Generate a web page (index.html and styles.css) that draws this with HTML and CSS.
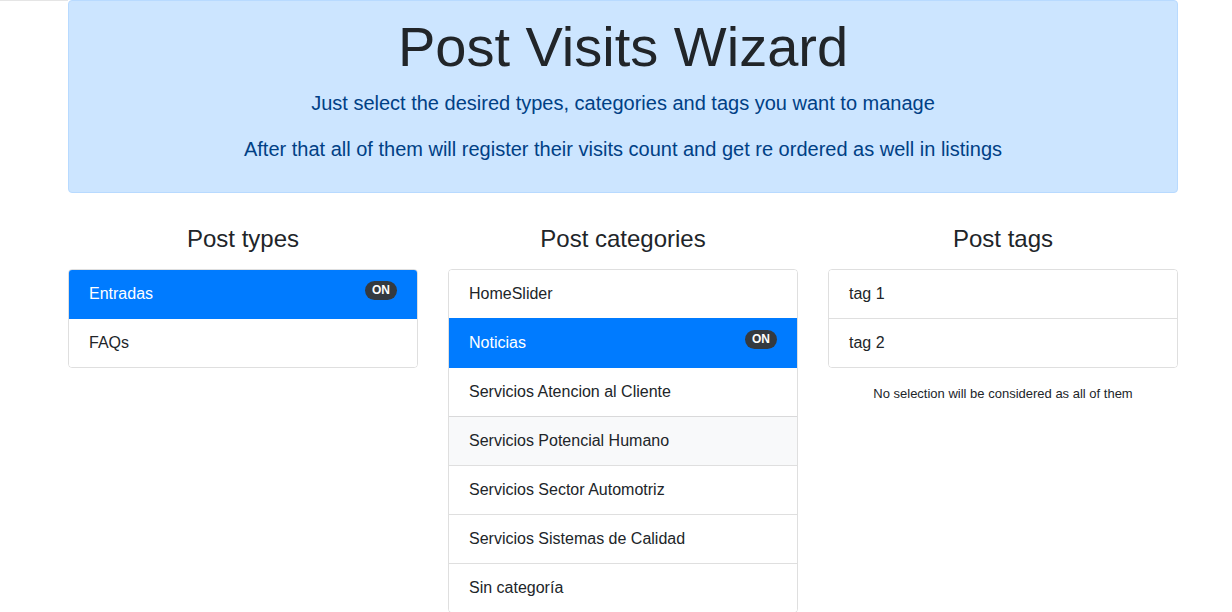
FILE: index.html
```html
<!DOCTYPE html>
<html lang="en">
<head>
<meta charset="utf-8">
<title>Post Visits Wizard</title>
<link rel="stylesheet" href="styles.css">
</head>
<body>
<div class="page">
  <div class="container">
    <div class="alert">
      <h1 class="title">Post Visits Wizard</h1>
      <p class="lead">Just select the desired types, categories and tags you want to manage</p>
      <p class="lead">After that all of them will register their visits count and get re ordered as well in listings</p>
    </div>
    <div class="columns">
      <div class="col">
        <h4 class="col-title">Post types</h4>
        <ul class="list">
          <li class="item active">Entradas<span class="badge">ON</span></li>
          <li class="item">FAQs</li>
        </ul>
      </div>
      <div class="col">
        <h4 class="col-title">Post categories</h4>
        <ul class="list">
          <li class="item">HomeSlider</li>
          <li class="item active">Noticias<span class="badge">ON</span></li>
          <li class="item">Servicios Atencion al Cliente</li>
          <li class="item hover">Servicios Potencial Humano</li>
          <li class="item">Servicios Sector Automotriz</li>
          <li class="item">Servicios Sistemas de Calidad</li>
          <li class="item">Sin categoría</li>
        </ul>
      </div>
      <div class="col">
        <h4 class="col-title">Post tags</h4>
        <ul class="list">
          <li class="item">tag 1</li>
          <li class="item">tag 2</li>
        </ul>
        <p class="note">No selection will be considered as all of them</p>
      </div>
    </div>
  </div>
</div>
</body>
</html>
```

FILE: styles.css
```css
* { box-sizing: border-box; }
html, body { margin: 0; padding: 0; }
body {
  font-family: "Liberation Sans", Arial, Helvetica, sans-serif;
  font-size: 16px;
  line-height: 1.5;
  color: #212529;
  background: #fff linear-gradient(#e5e5e5, #e5e5e5) no-repeat 0 0 / 68px 1px;
}
.container {
  width: 1110px;
  margin-left: 68px;
}
.alert {
  background: #cce5ff;
  border: 1px solid #b8daff;
  border-radius: 4px;
  color: #004085;
  padding: 12px 20px;
  margin-bottom: 16px;
  text-align: center;
}
.title {
  font-size: 56px;
  font-weight: 300;
  line-height: 1.2;
  color: #212529;
  margin: 0 0 8px;
}
.lead {
  font-size: 20px;
  line-height: 30px;
  margin: 0 0 16px;
}
.columns {
  display: grid;
  grid-template-columns: repeat(3, 350px);
  column-gap: 30px;
}
.col-title {
  font-size: 24px;
  font-weight: 500;
  line-height: 28px;
  text-align: center;
  margin: 16px 0 16px;
}
.list {
  list-style: none;
  margin: 0;
  padding: 0;
  border: 1px solid rgba(0,0,0,.125);
  border-radius: 4px;
  overflow: hidden;
}
.item {
  display: flex;
  justify-content: space-between;
  align-items: center;
  padding: 12px 20px;
  line-height: 24px;
  border-top: 1px solid rgba(0,0,0,.125);
  background: #fff;
}
.item:first-child { border-top: 0; }
.item.active {
  position: relative;
  z-index: 1;
  background: #007bff;
  color: #fff;
  margin: 0 -1px;
  padding: 12px 21px;
  border-top: 1px solid #007bff;
  box-shadow: 0 1px 0 #007bff;
}
.list > .item.active:first-child { margin-top: -1px; padding-top: 12px; }
.item.hover { background: #f8f9fa; }
.badge {
  display: inline-block;
  background: #343a40;
  color: #fff;
  font-size: 12px;
  font-weight: 700;
  line-height: 1;
  padding: 3px 7px 4px;
  border-radius: 10rem;
  margin-top: -8px;
}
.note {
  font-size: 13px;
  line-height: 19px;
  text-align: center;
  margin: 16px 0 0;
}
```
